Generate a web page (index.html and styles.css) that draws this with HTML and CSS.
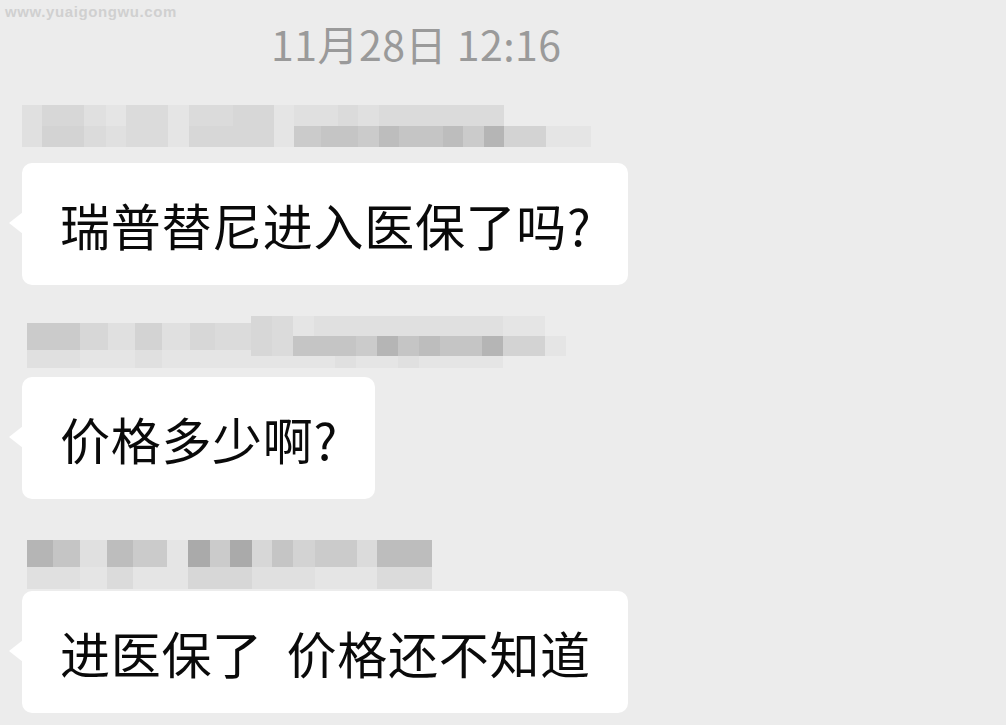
FILE: index.html
```html
<!DOCTYPE html>
<html lang="zh-CN">
<head>
<meta charset="utf-8">
<title>聊天记录</title>
<link rel="stylesheet" href="styles.css">
</head>
<body>
<div class="watermark">www.yuaigongwu.com</div>
<div class="time">11月28日 12:16</div>
<main class="chat">
  <div class="mosaic m1">
    <span class="col w20"><i class="b"></i><i class="b"></i></span>
    <span class="col w42"><i class="d"></i><i class="e"></i></span>
    <span class="col w22"><i class="b"></i><i class="c"></i></span>
    <span class="col w20"><i class="a"></i><i class="b"></i></span>
    <span class="col w22"><i class="c"></i><i class="c"></i></span>
    <span class="col w20"><i class="c"></i><i class="c"></i></span>
    <span class="col w21"><i class="a"></i><i class="a"></i></span>
    <span class="col w44"><i class="c"></i><i class="d"></i></span>
    <span class="col w41"><i class="d"></i><i class="d"></i></span>
    <span class="col w20"><i class="a"></i><i class="a"></i></span>
    <span class="col w27"><i class="b"></i><i class="f"></i></span>
    <span class="col w17"><i class="b"></i><i class="g"></i></span>
    <span class="col w20"><i class="c"></i><i class="g"></i></span>
    <span class="col w21"><i class="b"></i><i class="f"></i></span>
    <span class="col w20"><i class="c"></i><i class="h"></i></span>
    <span class="col w22"><i class="c"></i><i class="g"></i></span>
    <span class="col w22"><i class="c"></i><i class="g"></i></span>
    <span class="col w20"><i class="c"></i><i class="h"></i></span>
    <span class="col w21"><i class="c"></i><i class="f"></i></span>
    <span class="col w20"><i class="c"></i><i class="i"></i></span>
    <span class="col w22"><i class="z"></i><i class="e"></i></span>
    <span class="col w20"><i class="z"></i><i class="e"></i></span>
    <span class="col w45"><i class="z"></i><i class="a"></i></span>
  </div>
  <div class="bubble wide">瑞普替尼进入医保了吗?</div>

  <div class="mosaic m2">
    <div class="seg sega">
      <span class="col w28"><i class="f"></i><i class="b"></i></span>
      <span class="col w25"><i class="f"></i><i class="b"></i></span>
      <span class="col w28"><i class="d"></i><i class="a"></i></span>
      <span class="col w27"><i class="b"></i><i class="a"></i></span>
      <span class="col w27"><i class="e"></i><i class="b"></i></span>
      <span class="col w28"><i class="b"></i><i class="a"></i></span>
      <span class="col w25"><i class="d"></i><i class="a"></i></span>
      <span class="col w36"><i class="c"></i><i class="a"></i></span>
    </div>
    <div class="seg segb">
      <span class="col w21"><i class="d"></i><i class="d"></i><i class="a"></i></span>
      <span class="col w21"><i class="c"></i><i class="c"></i><i class="a"></i></span>
      <span class="col w21"><i class="a"></i><i class="g"></i><i class="a"></i></span>
      <span class="col w21"><i class="b"></i><i class="g"></i><i class="a"></i></span>
      <span class="col w21"><i class="b"></i><i class="g"></i><i class="b"></i></span>
      <span class="col w21"><i class="b"></i><i class="f"></i><i class="a"></i></span>
      <span class="col w21"><i class="b"></i><i class="i"></i><i class="a"></i></span>
      <span class="col w21"><i class="b"></i><i class="g"></i><i class="b"></i></span>
      <span class="col w21"><i class="b"></i><i class="h"></i><i class="a"></i></span>
      <span class="col w21"><i class="b"></i><i class="g"></i><i class="a"></i></span>
      <span class="col w21"><i class="b"></i><i class="g"></i><i class="a"></i></span>
      <span class="col w21"><i class="b"></i><i class="i"></i><i class="a"></i></span>
      <span class="col w21"><i class="a"></i><i class="e"></i><i class="z"></i></span>
      <span class="col w21"><i class="a"></i><i class="e"></i><i class="z"></i></span>
      <span class="col w21"><i class="z"></i><i class="a"></i><i class="z"></i></span>
    </div>
  </div>
  <div class="bubble">价格多少啊?</div>

  <div class="mosaic m3">
    <span class="col w26"><i class="i"></i><i class="b"></i></span>
    <span class="col w27"><i class="g"></i><i class="b"></i></span>
    <span class="col w27"><i class="b"></i><i class="a"></i></span>
    <span class="col w26"><i class="h"></i><i class="c"></i></span>
    <span class="col w34"><i class="f"></i><i class="a"></i></span>
    <span class="col w21"><i class="a"></i><i class="a"></i></span>
    <span class="col w22"><i class="j"></i><i class="d"></i></span>
    <span class="col w20"><i class="f"></i><i class="d"></i></span>
    <span class="col w22"><i class="j"></i><i class="d"></i></span>
    <span class="col w20"><i class="d"></i><i class="b"></i></span>
    <span class="col w21"><i class="g"></i><i class="b"></i></span>
    <span class="col w22"><i class="e"></i><i class="b"></i></span>
    <span class="col w22"><i class="f"></i><i class="a"></i></span>
    <span class="col w20"><i class="f"></i><i class="a"></i></span>
    <span class="col w20"><i class="c"></i><i class="a"></i></span>
    <span class="col w55"><i class="h"></i><i class="c"></i></span>
  </div>
  <div class="bubble wide keep">进医保了  价格还不知道</div>
</main>
</body>
</html>
```

FILE: styles.css
```css
* {
  box-sizing: border-box;
}

html,
body {
  margin: 0;
  padding: 0;
  background: #ececec;
}

body {
  position: relative;
  width: 1006px;
  height: 725px;
  overflow: hidden;
  font-family: "Noto Sans CJK SC", "Noto Sans", sans-serif;
  color: #0a0a0a;
}

.watermark {
  position: absolute;
  top: 3px;
  left: 5px;
  font-family: "Liberation Sans", Arial, sans-serif;
  font-weight: 700;
  font-size: 15px;
  letter-spacing: 0.6px;
  color: #d0d0d0;
  line-height: 17px;
}

.time {
  padding: 18px 0 0 271px;
  height: 68px;
  font-size: 41px;
  line-height: 50px;
  color: #9a9a9a;
  letter-spacing: 0.5px;
}

.chat {
  display: flex;
  flex-direction: column;
  align-items: flex-start;
  padding-left: 22px;
}

/* blurred (mosaic) sender names */
.mosaic {
  display: flex;
  align-items: flex-start;
}

.seg {
  display: flex;
}

.col {
  display: flex;
  flex-direction: column;
}

.col i {
  display: block;
}

.m1 {
  margin-top: 37px;
}

.m1 .col i {
  height: 21px;
}

.m2 {
  margin-top: 31px;
  margin-left: 5px;
  height: 52px;
}

.sega {
  margin-top: 7px;
}

.sega .col i:first-child {
  height: 27px;
}

.sega .col i:last-child {
  height: 18px;
}

.segb .col i {
  height: 20px;
}

.segb .col i:last-child {
  height: 12px;
}

.m3 {
  margin-top: 41px;
  margin-left: 5px;
}

.m3 .col i:first-child {
  height: 27px;
}

.m3 .col i:last-child {
  height: 22px;
}

.w17 { width: 17px; }
.w20 { width: 20px; }
.w21 { width: 21px; }
.w22 { width: 22px; }
.w25 { width: 25px; }
.w26 { width: 26px; }
.w27 { width: 27px; }
.w28 { width: 28px; }
.w34 { width: 34px; }
.w36 { width: 36px; }
.w41 { width: 41px; }
.w42 { width: 42px; }
.w44 { width: 44px; }
.w45 { width: 45px; }
.w55 { width: 55px; }

.z { background: transparent; }
.a { background: #e5e5e5; }
.b { background: #e0e0e0; }
.c { background: #dbdbdb; }
.d { background: #d7d7d7; }
.e { background: #d3d3d3; }
.f { background: #cbcbcb; }
.g { background: #c5c5c5; }
.h { background: #bdbdbd; }
.i { background: #b5b5b5; }
.j { background: #aaaaaa; }

/* message bubbles */
.bubble {
  position: relative;
  background: #ffffff;
  border-radius: 10px;
  padding: 26px 37px 26px 38px;
  font-size: 50px;
  line-height: 70px;
  letter-spacing: 0.7px;
  height: 122px;
  white-space: nowrap;
}

.bubble::before {
  content: "";
  position: absolute;
  left: -13px;
  top: 49px;
  border-top: 11px solid transparent;
  border-bottom: 11px solid transparent;
  border-right: 14px solid #ffffff;
}

.keep {
  white-space: pre;
}

.m1 + .bubble {
  margin-top: 16px;
}

.m2 + .bubble {
  margin-top: 9px;
}

.m3 + .bubble {
  margin-top: 2px;
}
```
